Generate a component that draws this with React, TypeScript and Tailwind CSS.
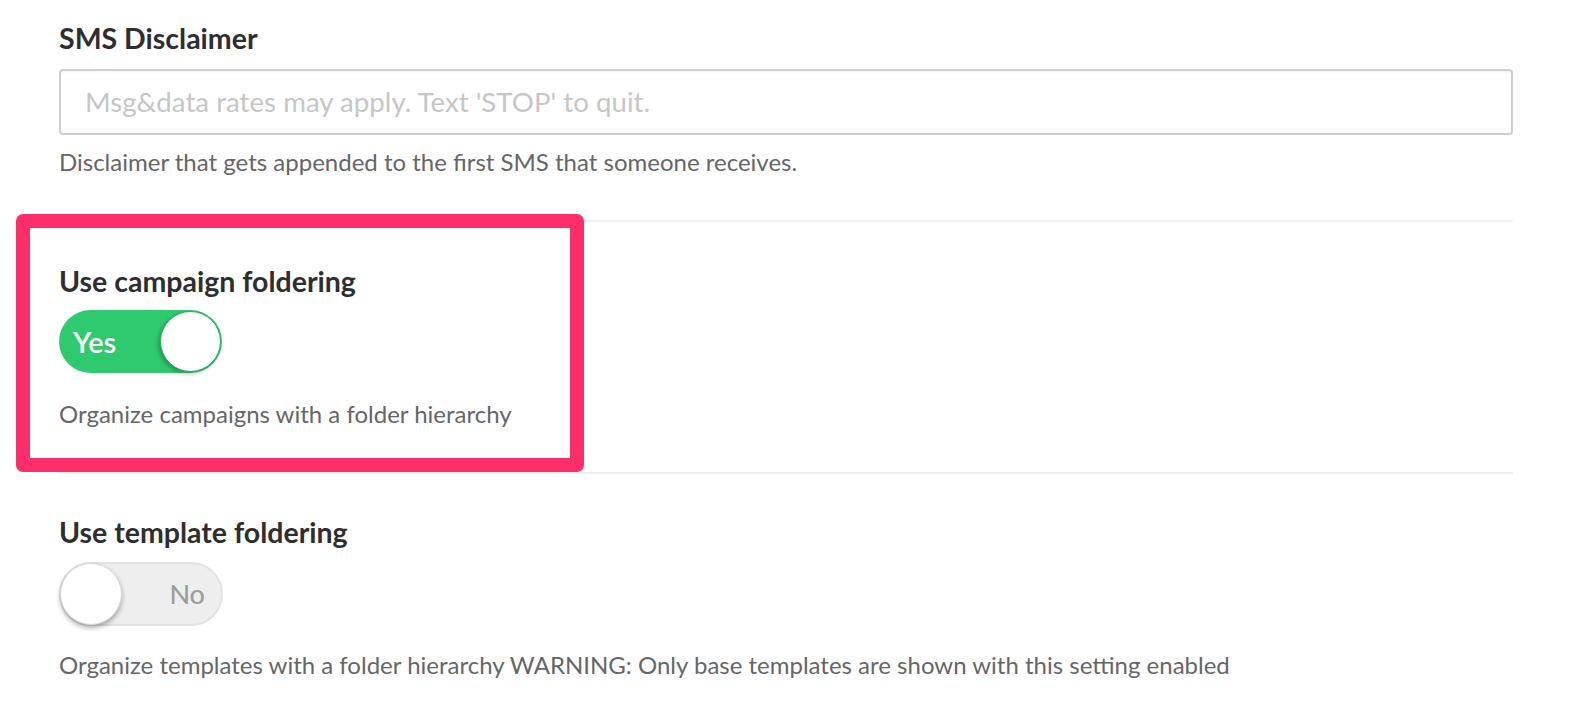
import React from "react";

const font = { fontFamily: "Lato, 'Liberation Sans', sans-serif" };

function Toggle({ on }: { on: boolean }) {
  if (on) {
    return (
      <div className="relative flex h-[63px] w-[163px] items-center rounded-full bg-[#2fca70]">
        <span className="pl-[14px] text-[29px] font-semibold text-white">Yes</span>
        <div className="absolute right-[1px] top-[1px] h-[61px] w-[61px] rounded-full border border-[#27a95d] bg-white shadow-[-2px_2px_4px_rgba(0,0,0,0.25)]" />
      </div>
    );
  }
  return (
    <div className="relative flex h-[64px] w-[164px] items-center justify-end rounded-full border-2 border-[#e2e2e2] bg-[#eeeeee]">
      <span className="pr-[16px] text-[27px] font-medium text-[#9d9d9d]">No</span>
      <div className="absolute left-[-1px] top-[-1px] h-[62px] w-[62px] rounded-full border border-[#d6d6d6] bg-white shadow-[0_3px_5px_rgba(0,0,0,0.3)]" />
    </div>
  );
}

export default function App() {
  return (
    <div className="relative h-[718px] w-[1576px] bg-white" style={font}>
      <div className="pl-[59px] pr-[63px]">
        <section className="border-b-2 border-[#efefef] pt-[22px] pb-[44px]">
          <h2 className="flex h-[32px] items-center text-[28.5px] font-bold text-[#2e2e2e]">SMS Disclaimer</h2>
          <div className="mt-[15px] flex h-[66px] items-center rounded-[4px] border-2 border-[#cfcfcf] pl-[24px] shadow-[inset_0_1px_2px_rgba(0,0,0,0.06)]">
            <span className="text-[27.7px] text-[#c6c6c6]">Msg&amp;data rates may apply. Text 'STOP' to quit.</span>
          </div>
          <p className="mt-[13px] flex h-[28px] items-center text-[24px] text-[#666666]">
            Disclaimer that gets appended to the first SMS that someone receives.
          </p>
        </section>
        <section className="border-b-2 border-[#efefef] pt-[43px] pb-[44px]">
          <h2 className="flex h-[32px] items-center text-[28.5px] font-bold text-[#2e2e2e]">Use campaign foldering</h2>
          <div className="mt-[13px]">
            <Toggle on />
          </div>
          <p className="mt-[27px] flex h-[28px] items-center text-[24px] text-[#666666]">
            Organize campaigns with a folder hierarchy
          </p>
        </section>
        <section className="pt-[42px]">
          <h2 className="flex h-[32px] items-center text-[28.5px] font-bold text-[#2e2e2e]">Use template foldering</h2>
          <div className="mt-[14px]">
            <Toggle on={false} />
          </div>
          <p className="mt-[25px] flex h-[28px] items-center text-[24px] text-[#666666]">
            Organize templates with a folder hierarchy WARNING: Only base templates are shown with this setting enabled
          </p>
        </section>
      </div>
      <div className="pointer-events-none absolute left-[16px] top-[214px] h-[258px] w-[568px] rounded-[7px] border-[14px] border-[#fe2e6b]" />
    </div>
  );
}
